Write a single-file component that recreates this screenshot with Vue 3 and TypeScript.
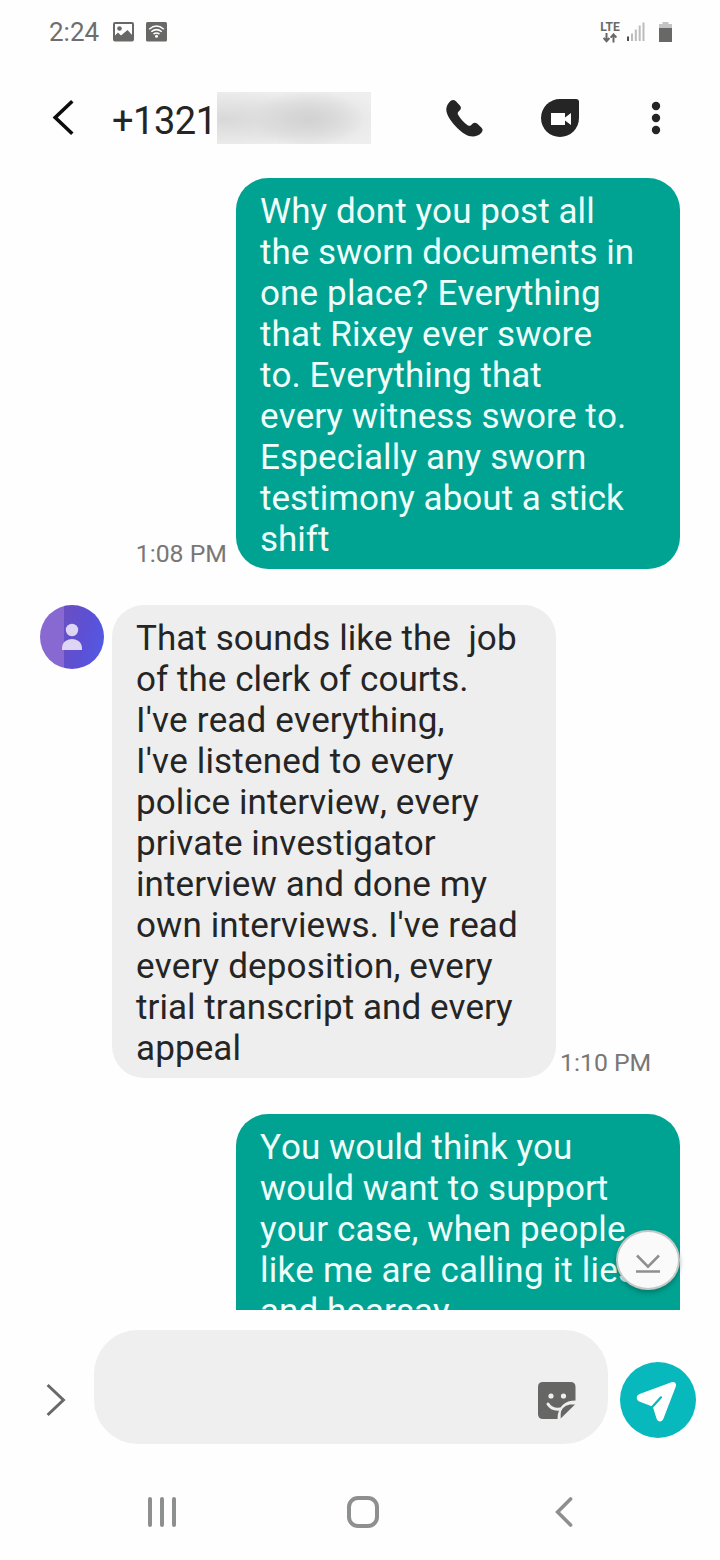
<script setup lang="ts">
interface Line {
  text: string
  tracking: number
}

interface Message {
  id: number
  side: 'sent' | 'received'
  time: string
  lines: Line[]
}

const line = (text: string, tracking = 0): Line => ({ text, tracking })

const messages: Message[] = [
  {
    id: 1,
    side: 'sent',
    time: '1:08 PM',
    lines: [
      line('Why dont you post all', 0.08),
      line('the sworn documents in'),
      line('one place? Everything', 0.14),
      line('that Rixey ever swore', 0.08),
      line('to. Everything that', 0.03),
      line('every witness swore to.', 0.09),
      line('Especially any sworn', 0.15),
      line('testimony about a stick', 0.03),
      line('shift'),
    ],
  },
  {
    id: 2,
    side: 'received',
    time: '1:10 PM',
    lines: [
      line('That sounds like the  job', 0.06),
      line('of the clerk of courts.', 0.05),
      line("I've read everything,", 0.16),
      line("I've listened to every", 0.18),
      line('police interview, every', 0.11),
      line('private investigator', 0.08),
      line('interview and done my', 0.1),
      line("own interviews. I've read", 0.1),
      line('every deposition, every', 0.16),
      line('trial transcript and every', 0.04),
      line('appeal', 0.1),
    ],
  },
  {
    id: 3,
    side: 'sent',
    time: '',
    lines: [
      line('You would think you'),
      line('would want to support', 0.05),
      line('your case, when people', 0.12),
      line('like me are calling it lies', 0.2),
      line('and hearsay', 0.05),
    ],
  },
]
</script>

<template>
  <div class="phone">
    <div class="status">
      <span class="clock">2:24</span>
      <svg class="picture" width="22" height="20" viewBox="0 0 22 20">
        <rect x="1" y="1" width="19" height="17.500" rx="1" fill="#fff" stroke="#686866" stroke-width="2" />
        <circle cx="6.500" cy="6.500" r="2.300" fill="#686866" />
        <path d="M1 14.500 5 10.500l3 3L14.500 8l5.500 6V18.500H1Z" fill="#686866" />
      </svg>
      <svg class="wifi" width="22" height="20" viewBox="0 0 22 20">
        <rect x="0" y="0" width="21" height="19.500" rx="1.500" fill="#686866" />
        <g fill="none" stroke="#fff" stroke-width="1.500">
          <path d="M3.200 7.200q7.300-6.400 14.600 0" />
          <path d="M5.300 9.800q5.200-4.400 10.400 0" />
          <path d="M7.500 12.200q3-2.400 6 0" />
        </g>
        <circle cx="10.500" cy="14.300" r="1.500" fill="#fff" />
      </svg>
      <div class="network">
        <span class="lte">LTE</span>
        <svg width="14" height="10" viewBox="0 0 14 10" fill="none" stroke="#686866" stroke-width="2">
          <path d="M3.500 0v8M.600 5l2.900 3.200L6.400 5M10.500 9.500v-8M7.600 4.600l2.900-3.200 2.900 3.200" />
        </svg>
      </div>
      <svg class="signal" width="19" height="20" viewBox="0 0 19 20">
        <rect x="0" y="14.500" width="2" height="4.500" fill="#4c4c4a" />
        <g fill="#bcbcbc">
          <rect x="4" y="11.500" width="2" height="7.500" />
          <rect x="7.800" y="7.500" width="2" height="11.500" />
          <rect x="11.700" y="3.500" width="2" height="15.500" />
          <rect x="15.500" y="0.500" width="2" height="18.500" />
        </g>
      </svg>
      <svg class="battery" width="13" height="20" viewBox="0 0 13 20">
        <path d="M3.500 0h6v2H13v4H0V2h3.500Z" fill="#c3c5c5" />
        <path d="M0 6h13v13.500q0 .5-.5.500H.500Q0 20 0 19.500Z" fill="#686866" />
      </svg>
    </div>

    <header class="header">
      <svg class="back" width="24" height="38" viewBox="0 0 24 38" fill="none" stroke="#0c0c0c" stroke-width="3.600">
        <path d="M22.300 2.300 5.200 18.500 22.300 34.700" />
      </svg>
      <h1 class="number">+1321</h1>
      <div class="redacted"></div>
      <svg class="call" width="38" height="38" viewBox="0 0 38 38">
        <path
          d="M3.300 3.200C5.600.500 8 .400 9.900 2.300l4 4.300c1.400 1.600 1.300 3.200-.1 4.600l-1.400 1.600c-.8 1-.9 2-.3 3 2.800 4.600 5.700 7.800 9.900 10.600 1.100.6 2.100.6 3-.2l1.500-1.500c1.400-1.400 3.100-1.400 4.600-.1l4.200 3.800c1.700 1.600 1.700 3.500.1 5.300-4 4.500-11 4.800-16.200 1.500C12.600 31 6.500 24.600 2.300 17.400-.600 12.300-.400 7.400 3.300 3.200Z"
          fill="#252525"
        />
      </svg>
      <svg class="video" width="38" height="38" viewBox="0 0 38 38">
        <path d="M19 0h16q3 0 3 3v16A19 19 0 1 1 19 0Z" fill="#252525" />
        <path d="M10 14h14v4.500l6-4.500v12l-6-4.500V26H10Z" fill="#fff" />
      </svg>
      <svg class="more" width="10" height="34" viewBox="0 0 10 34" fill="#252525">
        <circle cx="5" cy="5" r="4.200" />
        <circle cx="5" cy="17" r="4.200" />
        <circle cx="5" cy="29" r="4.200" />
      </svg>
    </header>

    <main class="thread">
      <div v-for="m in messages" :key="m.id" class="row" :class="m.side">
        <svg v-if="m.side === 'received'" class="avatar" width="64" height="64" viewBox="0 0 64 64">
          <defs>
            <linearGradient id="shade" x1="0" y1="0" x2="1" y2="0.400">
              <stop offset="0" stop-color="#6b4fc2" />
              <stop offset="0.600" stop-color="#5c50d5" />
              <stop offset="1" stop-color="#5558e0" />
            </linearGradient>
            <clipPath id="disc"><circle cx="32" cy="32" r="32" /></clipPath>
          </defs>
          <g clip-path="url(#disc)">
            <rect width="24" height="64" fill="#8868d1" />
            <rect x="24" width="40" height="64" fill="url(#shade)" />
          </g>
          <circle cx="32" cy="25" r="6.200" fill="#ddd5f3" />
          <path d="M22 45v-1.500C22 37.500 26.500 34 32 34s10 3.500 10 9.500V45Z" fill="#ddd5f3" />
        </svg>
        <p class="bubble">
          <span v-for="(l, i) in m.lines" :key="i" class="line" :style="{ letterSpacing: l.tracking + 'px' }">{{ l.text }}</span>
        </p>
        <time v-if="m.time" class="time">{{ m.time }}</time>
      </div>
      <button class="jump" aria-label="Latest">
        <svg width="26" height="20" viewBox="0 0 26 20" fill="none" stroke="#8f8f8f" stroke-width="2.500">
          <path d="M2 1.500 13 12.700 24 1.500M1 17.500h24" />
        </svg>
      </button>
    </main>

    <footer class="compose">
      <svg class="expand" width="22" height="36" viewBox="0 0 22 36" fill="none" stroke="#686868" stroke-width="3">
        <path d="M1.600 3 17.400 18 1.600 33" />
      </svg>
      <div class="field">
        <svg class="sticker" width="38" height="38" viewBox="0 0 38 38">
          <path d="M5 0h27.500q5 0 5 5v13.500C27 18.500 19.800 24 19.500 37H5q-5 0-5-5V5q0-5 5-5Z" fill="#666664" />
          <path d="M37 22.500 22.700 36.500V32q.3-7.500 9.300-9.500Z" fill="#666664" />
          <g fill="#efefef">
            <circle cx="13" cy="14" r="2.600" />
            <circle cx="25.500" cy="14" r="2.600" />
          </g>
          <path d="M10 22q3.600 6 12 5" fill="none" stroke="#efefef" stroke-width="3" stroke-linecap="round" />
        </svg>
      </div>
      <button class="send" aria-label="Send">
        <svg width="76" height="76" viewBox="0 0 76 76">
          <path
            d="M19.500 32 51.500 20.300c3-1.100 5.200 1.100 4.400 4L43.300 57c-1.200 3.200-5.600 3.200-6.600 0L32.800 44.700 19.300 39.400c-3.500-1.500-3.300-6 .2-7.400Z"
            fill="#fff"
          />
          <path d="M31.500 45.800 41 35.300" stroke="#07b8bc" stroke-width="2.200" stroke-linecap="round" />
        </svg>
      </button>
    </footer>

    <nav class="nav">
      <svg class="recents" width="28" height="30" viewBox="0 0 28 30" stroke="#8d908e" stroke-width="4" stroke-linecap="round">
        <path d="M2 2v26M14 2v26M26 2v26" />
      </svg>
      <svg class="home" width="32" height="32" viewBox="0 0 32 32">
        <rect x="2" y="2" width="28" height="28" rx="9" fill="none" stroke="#8d908e" stroke-width="4" />
      </svg>
      <svg class="return" width="18" height="30" viewBox="0 0 18 30" fill="none" stroke="#8d908e" stroke-width="3.600" stroke-linecap="round">
        <path d="M15.600 2 2.600 15l13 13" />
      </svg>
    </nav>
  </div>
</template>

<style>
body {
  margin: 0;
  background: #fdfefd;
}
</style>

<style scoped>
.phone {
  display: flex;
  flex-direction: column;
  width: 720px;
  height: 1560px;
  overflow: hidden;
  background: #fdfefd;
  font-family: Roboto, sans-serif;
  color: #252525;
}
svg {
  display: block;
  flex: none;
}
button {
  border: 0;
  padding: 0;
}
.status {
  display: flex;
  align-items: center;
  box-sizing: border-box;
  height: 64px;
  padding: 0 48px 0 49px;
  color: #6e6e6e;
}
.clock {
  width: 64px;
  font-size: 26px;
  line-height: 30px;
}
.wifi {
  margin-left: 11px;
}
.network {
  display: flex;
  flex-direction: column;
  align-items: center;
  width: 22px;
  margin-left: auto;
}
.lte {
  font-size: 12px;
  font-weight: 700;
  line-height: 12px;
  color: #686866;
}
.signal {
  margin-left: 6px;
}
.battery {
  margin-left: 13px;
}
.header {
  display: flex;
  align-items: center;
  flex: none;
  height: 108px;
  padding-left: 50px;
}
.number {
  width: 105px;
  margin: 5px 0 0 38px;
  font-size: 38px;
  font-weight: 400;
  line-height: 46px;
  letter-spacing: -0.5px;
}
.redacted {
  width: 154px;
  height: 52px;
  background:
    radial-gradient(ellipse 56px 28px at 92px 27px, #d2d2d2, rgba(210, 210, 210, 0)),
    radial-gradient(ellipse 90px 30px at 8px 27px, #d8d8d8, rgba(216, 216, 216, 0)),
    radial-gradient(ellipse 80px 30px at 90px 27px, #dedede, rgba(222, 222, 222, 0)),
    #eee;
}
.call {
  margin-left: 75px;
}
.video {
  margin-left: 57px;
}
.more {
  margin-left: 72px;
}
.thread {
  position: relative;
  display: flex;
  flex-direction: column;
  gap: 36px;
  flex: none;
  box-sizing: border-box;
  height: 1138px;
  padding: 6px 40px 0;
  overflow: hidden;
}
.row {
  display: flex;
  flex: none;
  align-items: flex-end;
}
.row.sent {
  flex-direction: row-reverse;
}
.avatar {
  align-self: flex-start;
  margin-right: 8px;
}
.bubble {
  box-sizing: border-box;
  width: 444px;
  margin: 0;
  padding: 13px 20px 9px 24px;
  border-radius: 32px;
  font-size: 35px;
  line-height: 41px;
  font-kerning: none;
}
.sent .bubble {
  background: #00a292;
  color: #effffb;
}
.received .bubble {
  background: #eee;
}
.line {
  display: block;
  white-space: pre;
}
.time {
  font-size: 24.800px;
  line-height: 30px;
  color: #7a7676;
}
.sent .time {
  margin-right: 9px;
}
.received .time {
  margin-left: 4px;
}
.jump {
  position: absolute;
  right: 40px;
  bottom: 20px;
  display: flex;
  align-items: center;
  justify-content: center;
  box-sizing: border-box;
  width: 64px;
  height: 60px;
  padding-top: 7px;
  border: 2px solid #c4c8c7;
  border-radius: 50%;
  background: #fafafa;
  box-shadow: 0 3px 4px rgba(0, 60, 50, 0.35);
}
.compose {
  display: flex;
  flex: none;
  align-items: flex-start;
  height: 134px;
  padding: 20px 24px 0 46px;
}
.expand {
  margin-top: 52px;
}
.field {
  display: flex;
  align-items: flex-end;
  justify-content: flex-end;
  box-sizing: border-box;
  width: 514px;
  height: 114px;
  margin-left: 26px;
  padding: 0 32.500px 24px 0;
  border-radius: 44px;
  background: #efefef;
}
.send {
  width: 76px;
  height: 76px;
  margin: 32px 0 0 12px;
  border-radius: 50%;
  background: #07b8bc;
}
.nav {
  display: flex;
  align-items: center;
  flex: 1;
  padding-left: 148px;
}
.home {
  margin-left: 171px;
}
.return {
  margin-left: 176px;
}
</style>
